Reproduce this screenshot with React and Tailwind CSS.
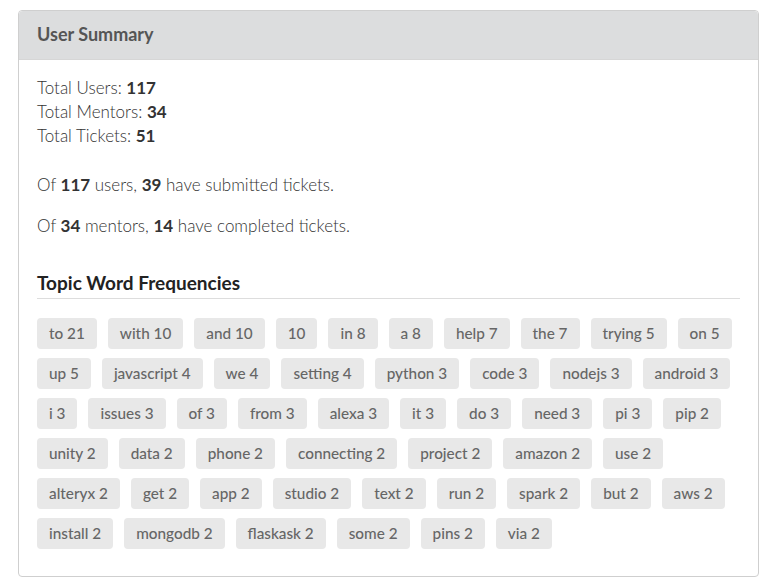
const words = [
  ["to", 21], ["with", 10], ["and", 10], ["", 10], ["in", 8], ["a", 8], ["help", 7], ["the", 7], ["trying", 5], ["on", 5],
  ["up", 5], ["javascript", 4], ["we", 4], ["setting", 4], ["python", 3], ["code", 3], ["nodejs", 3], ["android", 3],
  ["i", 3], ["issues", 3], ["of", 3], ["from", 3], ["alexa", 3], ["it", 3], ["do", 3], ["need", 3], ["pi", 3], ["pip", 2],
  ["unity", 2], ["data", 2], ["phone", 2], ["connecting", 2], ["project", 2], ["amazon", 2], ["use", 2],
  ["alteryx", 2], ["get", 2], ["app", 2], ["studio", 2], ["text", 2], ["run", 2], ["spark", 2], ["but", 2], ["aws", 2],
  ["install", 2], ["mongodb", 2], ["flaskask", 2], ["some", 2], ["pins", 2], ["via", 2],
];

export default function App() {
  return (
    <div className="min-h-screen bg-white pt-[10px] px-[18px] font-['Lato','Open_Sans',sans-serif] text-[#333]">
      <div className="w-[741px] rounded border border-[#cfcfcf] bg-white">
        <div className="flex h-[49px] items-center rounded-t border-b border-[#d6d6d6] bg-[#dcddde] px-[18px]">
          <h2 className="-mt-px text-[18px] font-bold text-[#555]">User Summary</h2>
        </div>

        <div className="px-[18px] pt-[16px] pb-[27px]">
          <div className="text-[17px] leading-[24px] font-light">
            <div>Total Users: <b className="font-bold">117</b></div>
            <div>Total Mentors: <b className="font-bold">34</b></div>
            <div>Total Tickets: <b className="font-bold">51</b></div>
          </div>

          <p className="mt-[25px] text-[17px] leading-[24px] font-light">
            Of <b className="font-bold">117</b> users, <b className="font-bold">39</b> have submitted tickets.
          </p>
          <p className="mt-[17px] text-[17px] leading-[24px] font-light">
            Of <b className="font-bold">34</b> mentors, <b className="font-bold">14</b> have completed tickets.
          </p>

          <h3 className="mt-[33px] border-b border-[#ddd] pb-[3px] text-[19px] leading-[24px] font-bold text-[#222]">
            Topic Word Frequencies
          </h3>

          <div className="mt-[19px] flex flex-wrap gap-x-[11px] gap-y-[9px]">
            {words.map(([w, n], i) => (
              <span
                key={i}
                className="rounded bg-[#e8e8e8] px-3 py-[5px] text-[15.3px] leading-[21px] font-medium text-[#666]"
              >
                {w ? `${w} ${n}` : n}
              </span>
            ))}
          </div>
        </div>
      </div>
    </div>
  );
}
